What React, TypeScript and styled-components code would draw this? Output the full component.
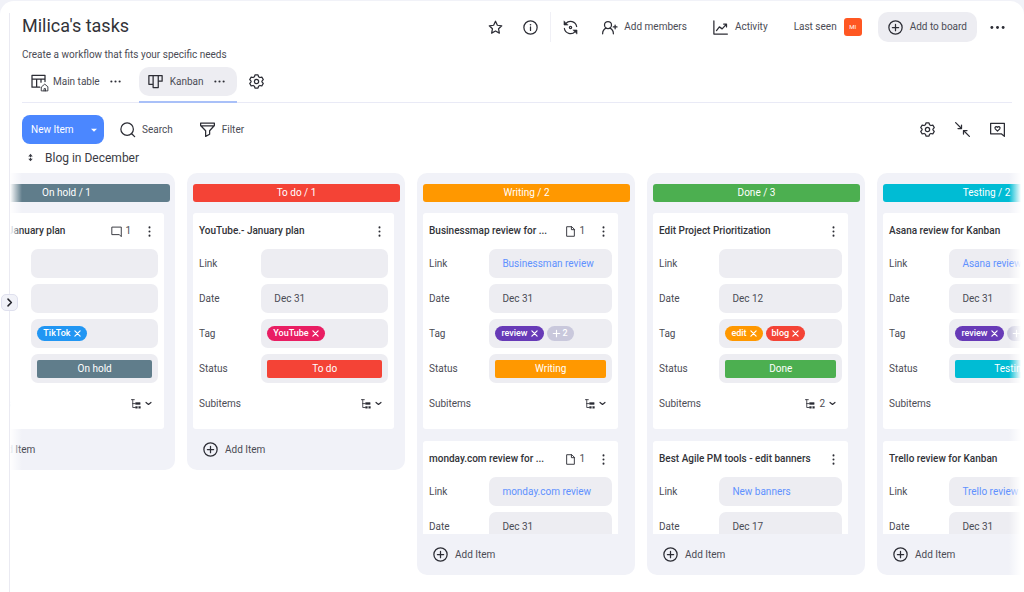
import React, { useLayoutEffect, useRef } from "react";
import styled, { createGlobalStyle } from "styled-components";

const GlobalStyle = createGlobalStyle`
  *, *::before, *::after { box-sizing: border-box; }
  body {
    margin: 0;
    background: #f1f2f8;
    color: #4b4c55;
    font: 400 10px/16px Roboto, "Liberation Sans", sans-serif;
  }
  h1, h2, h3, p { margin: 0; font: inherit; }
  button {
    border: 0;
    padding: 0;
    background: none;
    color: inherit;
    font: inherit;
    cursor: pointer;
  }
  a { color: inherit; text-decoration: none; }
  svg { display: block; flex: none; }
`;

/* ---------- icons ---------- */

const IconSvg = styled.svg<{ $size: number; $weight: number }>`
  width: ${(p) => p.$size}px;
  height: ${(p) => p.$size}px;
  fill: none;
  stroke: currentColor;
  stroke-width: ${(p) => p.$weight};
  stroke-linecap: round;
  stroke-linejoin: round;
  overflow: visible;
`;

type IconName = keyof typeof shapes;

const dots = (points: [number, number][], r: number) =>
  points.map(([x, y]) => (
    <circle key={`${x}-${y}`} cx={x} cy={y} r={r} fill="currentColor" stroke="none" />
  ));

const shapes = {
  star: <path d="M12 2l3 6.400 7 .9-5.100 4.800 1.300 6.900-6.200-3.400-6.200 3.400 1.300-6.900L2 9.300l7-.9z" />,
  info: (
    <>
      <circle cx="12" cy="12" r="10.600" />
      <path d="M12 11v5.600" />
      {dots([[12, 7.6]], 1.3)}
    </>
  ),
  sync: (
    <>
      <path d="M4.600 5.400A10 10 0 0 1 21.800 10.400M19.400 18.600A10 10 0 0 1 2.200 13.600" />
      <path d="M1.600 2v6h6zM22.400 22v-6h-6z" fill="currentColor" strokeWidth="1" />
      <circle cx="12" cy="12" r="1.800" />
    </>
  ),
  members: (
    <>
      <circle cx="9.600" cy="8" r="5.600" />
      <path d="M1 22c0-4.800 2.400-7.600 5.600-9M18.200 22c0-4.800-2.400-7.600-5.600-9M18 11h6M21 8v6" />
    </>
  ),
  activity: <path d="M1.400 1.400v21H23M5.600 17l4.600-6 4.400 3.200 7-7.600M17 6.400h4.600v4.600" />,
  plusCircle: (
    <>
      <circle cx="12" cy="12" r="10.600" />
      <path d="M12 7v10M7 12h10" />
    </>
  ),
  more: dots([[3, 12], [12, 12], [21, 12]], 2.3),
  kebab: dots([[12, 3], [12, 12], [12, 21]], 2.2),
  table: (
    <>
      <path d="M14 21H1.600V2h20.800v10M1.600 8h20.800M9 8v13M16 8v5" />
      <path d="M17 20.400l5-4.200 5 4.200V27H17zM20.800 27v-3.600h2.400V27" strokeWidth="1.400" />
    </>
  ),
  kanban: <path d="M1.400 2.400h21.200v9h-6.200v-9M1.400 2.400v14h6.800v-14M8.200 2.400v19.200h8.200V2.400" />,
  gear: (
    <>
      <path d="M9.600 1.400h4.800l.9 3 2.100 1.200 3.100-.7 2.300 4.100-2.100 2.300v1.400l2.100 2.300-2.300 4.100-3.100-.7-2.100 1.200-.9 3H9.600l-.9-3-2.100-1.200-3.100.7L1.200 15l2.100-2.300v-1.400L1.200 9l2.300-4.100 3.100.7 2.100-1.200z" />
      <circle cx="12" cy="12" r="3.400" />
    </>
  ),
  search: (
    <>
      <circle cx="11.400" cy="11.400" r="10" />
      <path d="M18.800 18.800l4.600 4.600" />
    </>
  ),
  filter: <path d="M1 1.600h22v4L15.400 14v5.600L9 23V14L1 5.600zM1.400 6.200h21.200" />,
  collapse: (
    <>
      <path d="M1 1l9 9M23 23l-9-9" />
      <path d="M10.400 4.800v5.600H4.800M13.600 19.200v-5.600h5.600" />
    </>
  ),
  feedback: (
    <>
      <path d="M23 22.800V2H1v16.800h17z" />
      <path d="M12 14.600l-3.600-3.700c-1.600-2.500 1.700-4.900 3.600-2.500 1.900-2.400 5.200 0 3.600 2.500z" />
    </>
  ),
  comment: <path d="M22.400 22.400V2.400H1.800v16.400h15.600z" />,
  file: <path d="M14 1.600H3.600v20.800h16.800V8zM14 1.600V8h6.400" />,
  tree: (
    <>
      <path d="M1 1.600h7M4.200 1.600V20.400h6.400M4.200 11h6.400" />
      <path
        d="M11.500 8.600h10.500v4.400h-10.500zM11.500 18h3.800v4.200h-3.800zM18.800 18h3.800v4.200h-3.800z"
        fill="currentColor"
        strokeWidth="1"
      />
    </>
  ),
  chevronDown: <path d="M3.500 8.500l8.500 7 8.500-7" />,
  chevronRight: <path d="M8 3l9 9-9 9" />,
  caret: <path d="M3 8h18l-9 9z" fill="currentColor" stroke="none" />,
  close: <path d="M3 3l18 18M21 3L3 21" />,
  plus: <path d="M12 1v22M1 12h22" />,
  sort: (
    <>
      <path d="M12 7v3M12 14v3" />
      <path d="M6 9l6-7 6 7zM6 15l6 7 6-7z" fill="currentColor" stroke="none" />
    </>
  ),
};

const Icon = ({ name, size = 15, weight = 2 }: { name: IconName; size?: number; weight?: number }) => (
  <IconSvg $size={size} $weight={weight} viewBox="0 0 24 24" aria-hidden="true">
    {shapes[name]}
  </IconSvg>
);

/* ---------- page frame ---------- */

const Shell = styled.div`
  display: flex;
  margin-top: 1px;
  min-height: calc(100vh - 1px);
  background: #fff;
  border-radius: 14px 14px 0 0;
`;

const Rail = styled.aside`
  position: relative;
  flex: none;
  width: 10px;
  margin-top: 12px;
  border-right: 1px solid #eaeaf2;
`;

const RailToggle = styled.button`
  position: absolute;
  z-index: 3;
  top: 281px;
  left: 1px;
  display: grid;
  place-items: center;
  width: 17px;
  height: 17px;
  border: 1px solid #dfe0ee;
  border-radius: 5px;
  background: #f1f2f8;
  color: #23242b;
`;

const Main = styled.main`
  flex: 1;
  min-width: 0;
  padding-top: 11px;
`;

const Top = styled.header`
  padding: 0 12px;
`;

const TitleBar = styled.div`
  display: flex;
  align-items: center;
  justify-content: space-between;
  height: 30px;
`;

const BoardTitle = styled.h1`
  padding-bottom: 2px;
  color: #323338;
  font-size: 18px;
  line-height: 24px;
`;

const Actions = styled.div`
  display: flex;
  align-items: center;
  padding-right: 7px;
`;

const Action = styled.button<{ $gap?: number; $filled?: boolean }>`
  display: flex;
  align-items: center;
  gap: 7px;
  height: 30px;
  margin-left: ${(p) => p.$gap ?? 20}px;
  padding: 0 ${(p) => (p.$filled ? 10 : 0)}px;
  border-radius: 10px;
  background: ${(p) => (p.$filled ? "#ededf2" : "none")};

  svg { color: #2c2d35; }
`;

const Divider = styled.span`
  width: 1px;
  height: 30px;
  margin-left: 12px;
  background: #f0f0f6;
`;

const Avatar = styled.span`
  display: grid;
  place-items: center;
  width: 18px;
  height: 18px;
  border-radius: 3px;
  background: #ff5722;
  color: #fff;
  font-size: 6px;
  line-height: 8px;
`;

const Description = styled.p`
  padding-top: 5px;
`;

const Tabs = styled.nav`
  display: flex;
  align-items: flex-start;
  gap: 12px;
  height: 36px;
  margin-top: 4px;
  border-bottom: 1px solid #e9eaf6;
`;

const Tab = styled.div<{ $active?: boolean }>`
  position: relative;
  display: flex;
  align-items: center;
  gap: 7px;
  height: 29px;
  padding: 0 ${(p) => (p.$active ? 12 : 6)}px 0 9px;
  border-radius: 10px;
  background: ${(p) => (p.$active ? "#ededf2" : "none")};

  svg { color: #2c2d35; }

  &::after {
    content: "";
    position: absolute;
    right: 0;
    bottom: -7px;
    left: 0;
    height: 2px;
    background: ${(p) => (p.$active ? "#a9c0f8" : "none")};
  }
`;

const TabSettings = styled.button`
  height: 29px;
  color: #2c2d35;
`;

const IconButton = styled.button`
  display: grid;
  place-items: center;
  color: #2c2d35;
`;

const TabMenu = styled(IconButton)`
  margin-left: 3px;
`;

const Toolbar = styled.div`
  display: flex;
  align-items: center;
  height: 29px;
  margin-top: 12px;
`;

const NewItem = styled.button`
  display: flex;
  align-items: center;
  justify-content: space-between;
  width: 82px;
  height: 29px;
  padding: 0 6px 0 9px;
  border-radius: 8px;
  background: #4b87ff;
  color: #fff;
`;

const Tool = styled.button<{ $gap: number }>`
  display: flex;
  align-items: center;
  gap: 7px;
  margin-left: ${(p) => p.$gap}px;

  svg { color: #2c2d35; }
`;

const ViewTools = styled.div`
  display: flex;
  gap: 20px;
  margin-left: auto;
  padding-right: 7px;
`;

const GroupName = styled.h2`
  display: flex;
  align-items: center;
  gap: 10px;
  height: 29px;
  padding: 0 0 2px 4px;
  color: #3b3c45;
  font-size: 12px;
`;

/* ---------- board ---------- */

const BoardFrame = styled.section`
  position: relative;
  margin-right: 3px;

  &::before, &::after {
    content: "";
    position: absolute;
    z-index: 2;
    top: 0;
    bottom: 0;
    width: 12px;
    pointer-events: none;
  }
  &::before { left: 0; background: linear-gradient(to right, #fff, #fff0); }
  &::after { right: 0; background: linear-gradient(to left, #fff, #fff0); }
`;

const BoardScroll = styled.div`
  overflow-x: auto;
  scrollbar-width: none;
`;

const Track = styled.div`
  display: flex;
  align-items: flex-start;
  gap: 12px;
  width: max-content;
`;

const Column = styled.section`
  width: 218px;
  padding: 11px 5px 0 6px;
  border-radius: 10px;
  background: #f1f2f8;
`;

const ColumnTitle = styled.h2<{ $color: string }>`
  height: 18px;
  border-radius: 3px;
  background: ${(p) => p.$color};
  color: #fff;
  line-height: 18px;
  text-align: center;
`;

const ListArea = styled.div`
  display: flex;
  gap: 6px;
  max-height: calc(100vh - 271px);
  margin-top: 11px;
`;

const CardList = styled.div<{ $scrolls?: boolean }>`
  display: flex;
  flex: 1;
  flex-direction: column;
  gap: 12px;
  min-width: 0;
  margin-right: ${(p) => (p.$scrolls ? 0 : 6)}px;
  overflow: hidden;
`;

const ScrollThumb = styled.div<{ $share: number }>`
  flex: none;
  width: 6px;
  height: ${(p) => p.$share}%;
  border-radius: 3px;
  background: #e1e1ec;
`;

const Card = styled.article`
  flex: none;
  padding: 0 6px 11px;
  border-radius: 3px;
  background: #fff;
`;

const CardHead = styled.div`
  display: flex;
  align-items: center;
  height: 36px;
`;

const CardTitle = styled.h3`
  flex: 1;
  min-width: 0;
  color: #323338;
  font-weight: 500;
  white-space: nowrap;
`;

const Count = styled.span`
  display: flex;
  align-items: center;
  gap: 3px;
  margin-right: 13px;

  svg { color: #2c2d35; }
`;

const Kebab = styled.button`
  margin-right: 3px;
  color: #2c2d35;
`;

const Fields = styled.div`
  display: grid;
  gap: 6px;
`;

const Field = styled.div`
  display: grid;
  grid-template-columns: minmax(0, 33fr) minmax(0, 67fr);
  align-items: center;
  height: 29px;
`;

const Value = styled.div<{ $inset?: boolean }>`
  display: flex;
  align-items: center;
  gap: 3px;
  height: 29px;
  padding: 0 ${(p) => (p.$inset ? 6 : 13)}px;
  border-radius: 7px;
  background: #ededf2;
  white-space: nowrap;
`;

const ValueLink = styled.a`
  color: #6091ff;
`;

const Tag = styled.span<{ $color: string }>`
  display: flex;
  align-items: center;
  gap: 3px;
  height: 15px;
  padding: 0 6px;
  border-radius: 8px;
  background: ${(p) => p.$color};
  color: #fff;
  font-size: 9px;
  font-weight: 500;
  line-height: 15px;
`;

const Status = styled.button<{ $color: string }>`
  flex: 1;
  height: 18px;
  border-radius: 2px;
  background: ${(p) => p.$color};
  color: #fff;
  line-height: 18px;
`;

const Subitems = styled.button`
  display: flex;
  align-items: center;
  justify-content: flex-end;
  gap: 4px;
  padding-right: 6px;

  svg { color: #2c2d35; }
`;

const AddItem = styled.button`
  display: flex;
  align-items: center;
  gap: 7px;
  height: 41px;
  margin-left: 10px;

  svg { color: #2c2d35; }
`;

type TagData = { text: string; color: string };
type CardData = {
  title: string;
  link?: string;
  date?: string;
  tags: TagData[];
  extra?: number;
  subitems?: number;
  comments?: number;
  files?: number;
};
type ColumnData = { name: string; count: number; color: string; thumb?: number; cards: CardData[] };

const review: TagData = { text: "review", color: "#673ab7" };
const edit: TagData = { text: "edit", color: "#ff9800" };
const blog: TagData = { text: "blog", color: "#f44336" };

const columns: ColumnData[] = [
  {
    name: "On hold",
    count: 1,
    color: "#607d8b",
    cards: [{ title: "TikTok.- January plan", tags: [{ text: "TikTok", color: "#2196f3" }], comments: 1 }],
  },
  {
    name: "To do",
    count: 1,
    color: "#f44336",
    cards: [{ title: "YouTube.- January plan", date: "Dec 31", tags: [{ text: "YouTube", color: "#e91e63" }] }],
  },
  {
    name: "Writing",
    count: 2,
    color: "#ff9800",
    thumb: 72,
    cards: [
      { title: "Businessmap review for ...", link: "Businessman review", date: "Dec 31", tags: [review], extra: 2, files: 1 },
      { title: "monday.com review for ...", link: "monday.com review", date: "Dec 31", tags: [review], files: 1 },
    ],
  },
  {
    name: "Done",
    count: 3,
    color: "#4caf50",
    thumb: 48,
    cards: [
      { title: "Edit Project Prioritization", date: "Dec 12", tags: [edit, blog], subitems: 2 },
      { title: "Best Agile PM tools - edit banners", link: "New banners", date: "Dec 17", tags: [edit] },
    ],
  },
  {
    name: "Testing",
    count: 2,
    color: "#00bcd4",
    thumb: 72,
    cards: [
      { title: "Asana review for Kanban", link: "Asana review", date: "Dec 31", tags: [review], extra: 2 },
      { title: "Trello review for Kanban", link: "Trello review", date: "Dec 31", tags: [review] },
    ],
  },
];

const TaskCard = ({ card, column }: { card: CardData; column: ColumnData }) => (
  <Card>
    <CardHead>
      <CardTitle>{card.title}</CardTitle>
      {card.comments && (
        <Count>
          <Icon name="comment" size={11} />
          {card.comments}
        </Count>
      )}
      {card.files && (
        <Count>
          <Icon name="file" size={11} />
          {card.files}
        </Count>
      )}
      <Kebab aria-label="Item menu">
        <Icon name="kebab" size={11} />
      </Kebab>
    </CardHead>
    <Fields>
      <Field>
        <span>Link</span>
        <Value>{card.link && <ValueLink href="#">{card.link}</ValueLink>}</Value>
      </Field>
      <Field>
        <span>Date</span>
        <Value>{card.date}</Value>
      </Field>
      <Field>
        <span>Tag</span>
        <Value $inset>
          {card.tags.map((tag) => (
            <Tag key={tag.text} $color={tag.color}>
              {tag.text}
              <button aria-label={`Remove ${tag.text}`}>
                <Icon name="close" size={7} weight={4} />
              </button>
            </Tag>
          ))}
          {card.extra && (
            <Tag $color="#c9c8dc">
              <Icon name="plus" size={7} weight={4} />
              {card.extra}
            </Tag>
          )}
        </Value>
      </Field>
      <Field>
        <span>Status</span>
        <Value $inset>
          <Status $color={column.color}>{column.name}</Status>
        </Value>
      </Field>
      <Field>
        <span>Subitems</span>
        <Subitems aria-label="Show subitems">
          <Icon name="tree" size={10} />
          {card.subitems}
          <Icon name="chevronDown" size={7} weight={4} />
        </Subitems>
      </Field>
    </Fields>
  </Card>
);

const SCROLLED_BY = 53;

const Board = () => {
  const scroller = useRef<HTMLDivElement>(null);
  useLayoutEffect(() => {
    if (scroller.current) scroller.current.scrollLeft = SCROLLED_BY;
  }, []);
  return (
    <BoardFrame>
      <BoardScroll ref={scroller}>
        <Track>
          {columns.map((column) => (
            <Column key={column.name}>
              <ColumnTitle $color={column.color}>
                {column.name} / {column.count}
              </ColumnTitle>
              <ListArea>
                <CardList $scrolls={Boolean(column.thumb)}>
                  {column.cards.map((card) => (
                    <TaskCard key={card.title} card={card} column={column} />
                  ))}
                </CardList>
                {column.thumb && <ScrollThumb $share={column.thumb} />}
              </ListArea>
              <AddItem>
                <Icon name="plusCircle" />
                Add Item
              </AddItem>
            </Column>
          ))}
        </Track>
      </BoardScroll>
    </BoardFrame>
  );
};

export default function App() {
  return (
    <>
      <GlobalStyle />
      <Shell>
        <Rail>
          <RailToggle aria-label="Open sidebar">
            <Icon name="chevronRight" size={9} weight={4} />
          </RailToggle>
        </Rail>
        <Main>
          <Top>
            <TitleBar>
              <BoardTitle>Milica's tasks</BoardTitle>
              <Actions>
                <Action aria-label="Favorite"><Icon name="star" /></Action>
                <Action aria-label="Board info"><Icon name="info" /></Action>
                <Divider />
                <Action $gap={12} aria-label="Sync"><Icon name="sync" /></Action>
                <Action $gap={24}><Icon name="members" />Add members</Action>
                <Action $gap={26}><Icon name="activity" />Activity</Action>
                <Action $gap={26}>Last seen<Avatar>MI</Avatar></Action>
                <Action $gap={16} $filled><Icon name="plusCircle" />Add to board</Action>
                <Action $gap={13} aria-label="More"><Icon name="more" /></Action>
              </Actions>
            </TitleBar>
            <Description>Create a workflow that fits your specific needs</Description>
            <Tabs>
              <Tab>
                <Icon name="table" />
                <a href="#">Main table</a>
                <TabMenu aria-label="Main table menu"><Icon name="more" size={11} /></TabMenu>
              </Tab>
              <Tab $active>
                <Icon name="kanban" />
                <a href="#">Kanban</a>
                <TabMenu aria-label="Kanban menu"><Icon name="more" size={11} /></TabMenu>
              </Tab>
              <TabSettings aria-label="View settings"><Icon name="gear" /></TabSettings>
            </Tabs>
            <Toolbar>
              <NewItem>New Item<Icon name="caret" size={8} /></NewItem>
              <Tool $gap={16}><Icon name="search" />Search</Tool>
              <Tool $gap={27}><Icon name="filter" />Filter</Tool>
              <ViewTools>
                <IconButton aria-label="Board settings"><Icon name="gear" /></IconButton>
                <IconButton aria-label="Collapse columns"><Icon name="collapse" /></IconButton>
                <IconButton aria-label="Feedback"><Icon name="feedback" /></IconButton>
              </ViewTools>
            </Toolbar>
            <GroupName><Icon name="sort" size={9} weight={3} />Blog in December</GroupName>
          </Top>
          <Board />
        </Main>
      </Shell>
    </>
  );
}
